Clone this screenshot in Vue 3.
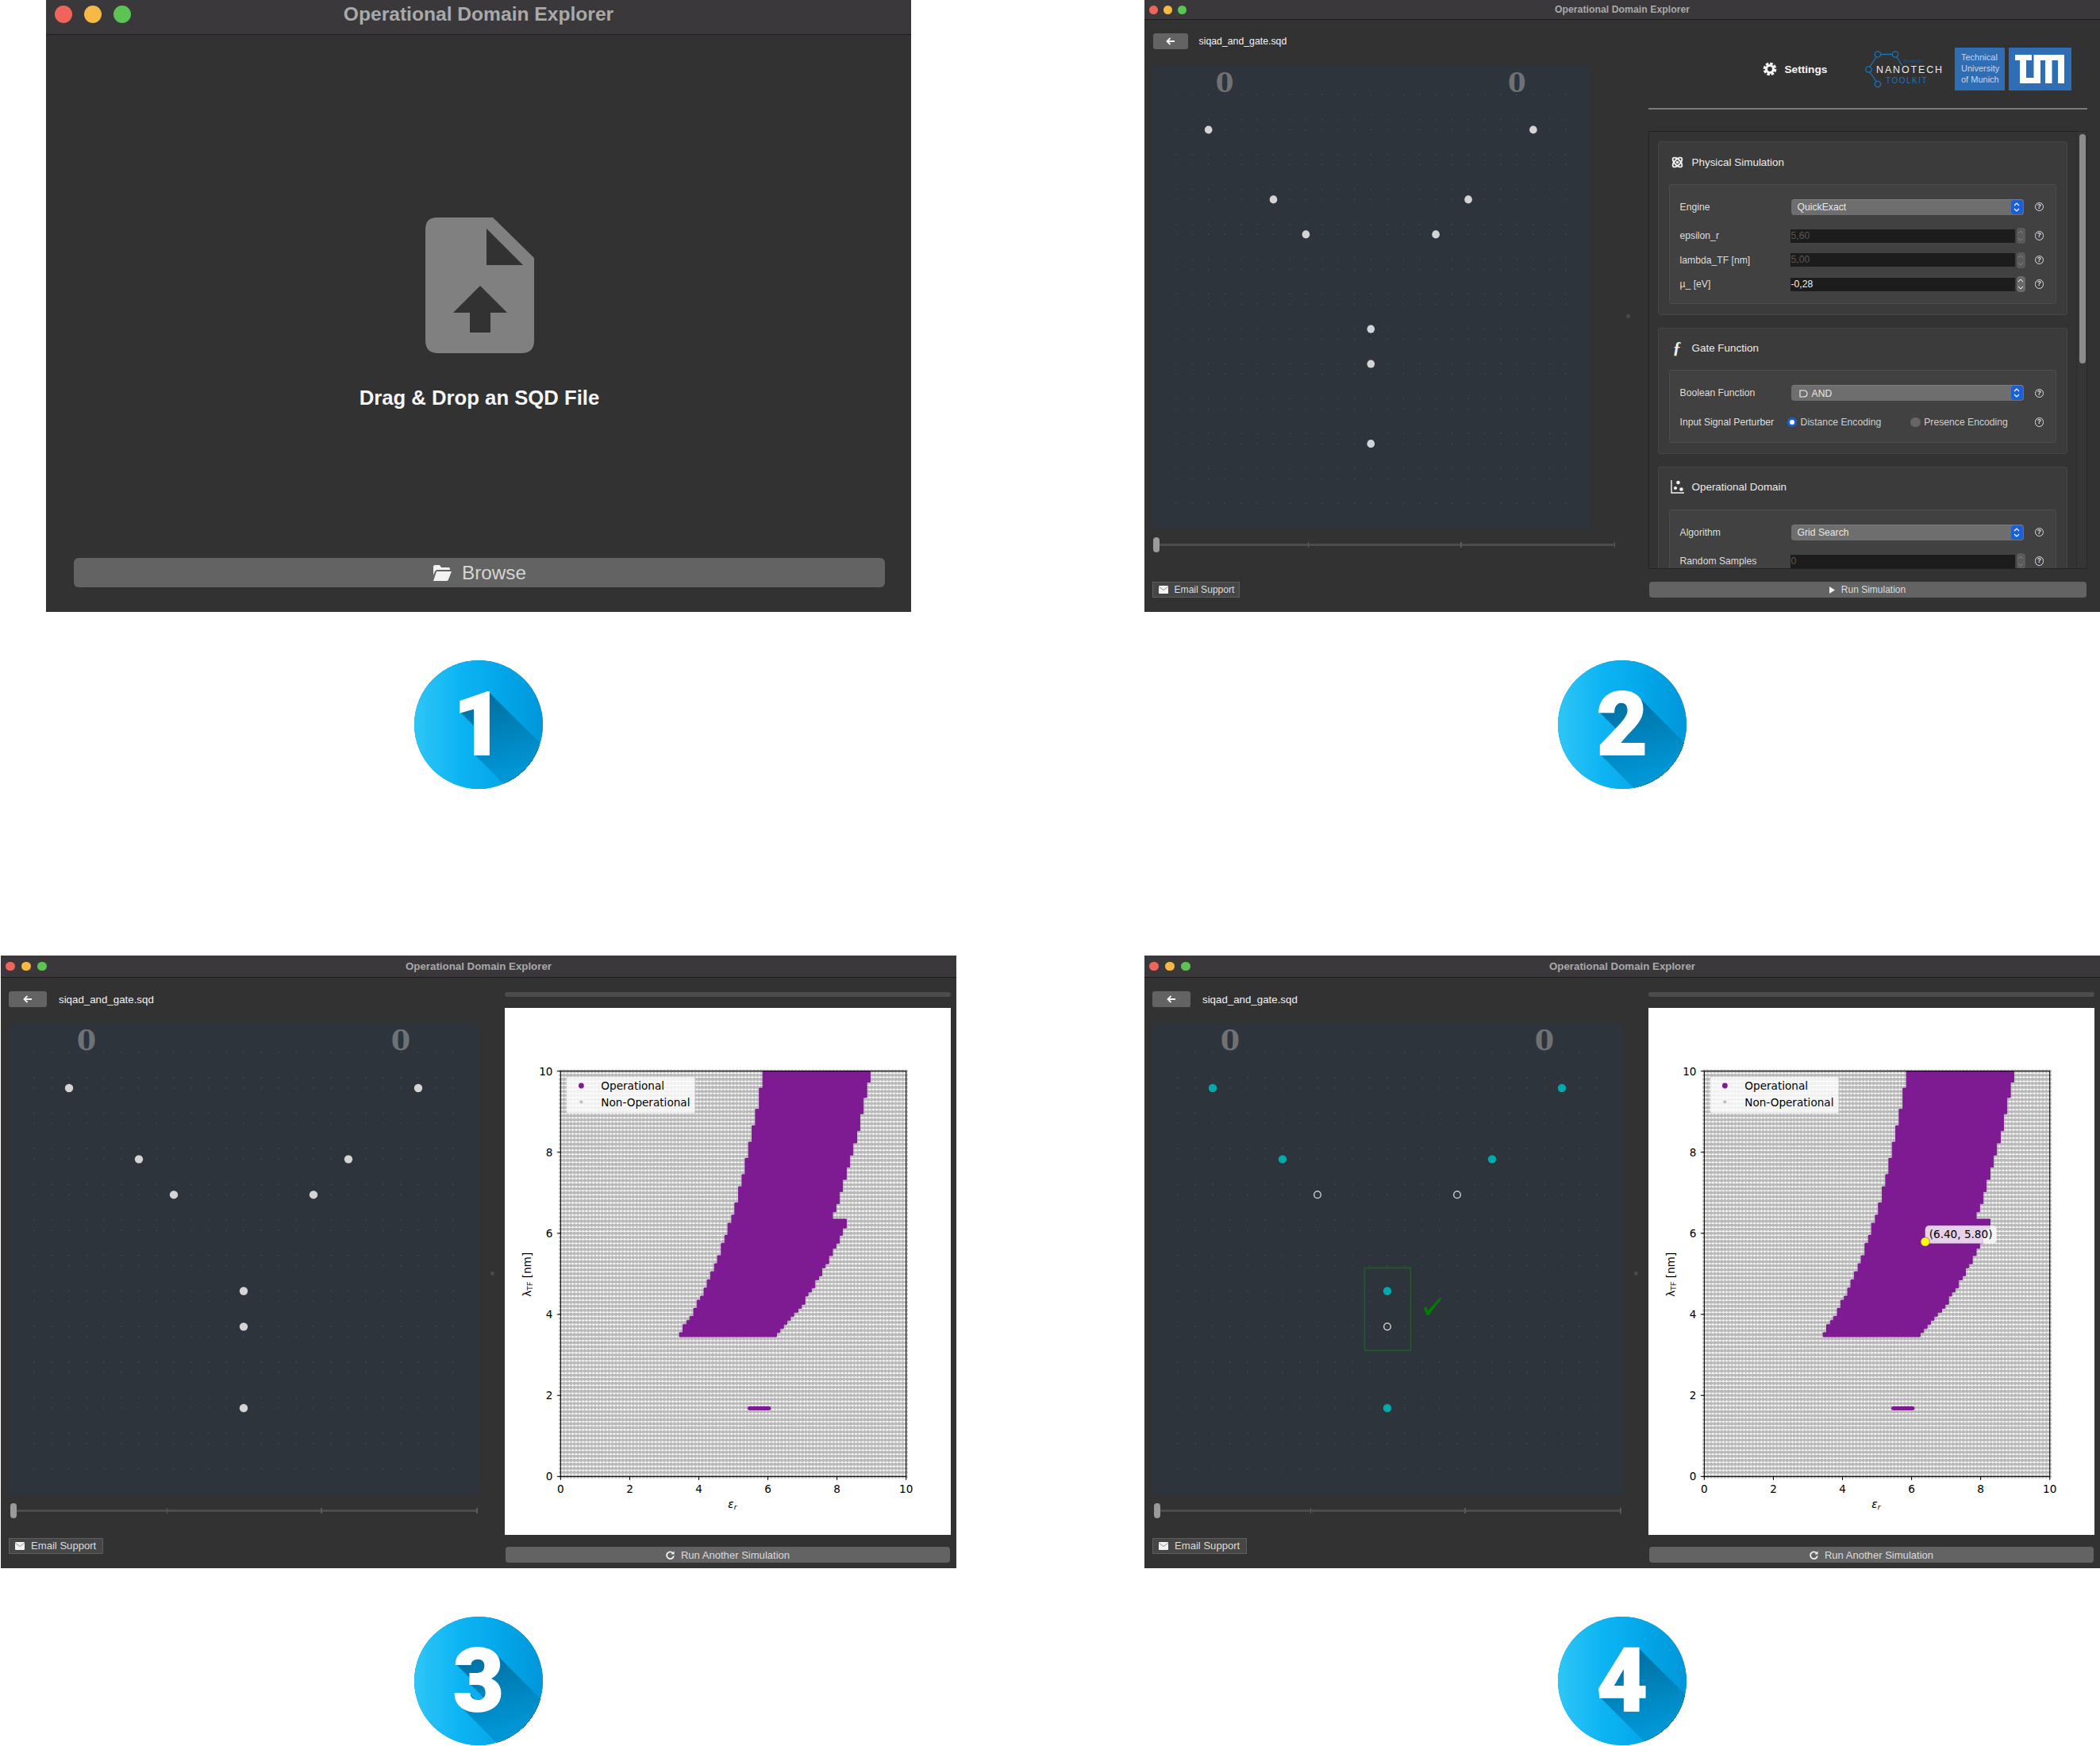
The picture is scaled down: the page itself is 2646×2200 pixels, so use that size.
<template>
  <div class="sheet">
    <!-- step 1: file picker -->
    <section class="step">
      <div class="window picker">
        <div class="titlebar">
          <span class="light red"></span><span class="light yellow"></span><span class="light green"></span>
          <span class="title">Operational Domain Explorer</span>
        </div>
        <div class="picker-body">
          <svg class="file-icon" viewBox="0 0 137 171">
            <path fill="#808080" d="M15 0H85L137 51V155Q137 171 121 171H16Q0 171 0 155V15Q0 0 15 0Z" />
            <path fill="#323232" d="M77 14V60H123Z" />
            <path fill="#323232" d="M69 86L103 120H82V145H56V120H35Z" />
          </svg>
          <p class="drop-text">Drag &amp; Drop an SQD File</p>
          <button class="browse">
            <svg class="folder" viewBox="0 0 24 20">
              <path fill="#f2f2f2" d="M1 2Q1 0 3 0H9L11 3H20Q22 3 22 5V6H6Q4 6 3 8L1 13Z" />
              <path fill="#f2f2f2" d="M5 8H24L20 18Q19.500 20 18 20H1Z" />
            </svg>
            Browse
          </button>
        </div>
      </div>
      <div class="badge"><span class="digit" :style="digitShadow">1</span></div>
    </section>

    <!-- steps 2 to 4 share the lattice pane -->
    <section v-for="win in windows" :key="win.step" class="step" :class="win.kind">
      <div class="window sim">
        <div class="titlebar">
          <span class="light red"></span><span class="light yellow"></span><span class="light green"></span>
          <span class="title">Operational Domain Explorer</span>
        </div>
        <div class="sim-body">
          <div class="lattice-pane">
            <div class="file-row">
              <button class="back">
                <svg viewBox="0 0 12 10" width="12" height="10">
                  <path d="M11 5H2M5.500 1L1.500 5L5.500 9" fill="none" stroke="#f4f4f4" stroke-width="1.800" />
                </svg>
              </button>
              <span class="file-name">siqad_and_gate.sqd</span>
            </div>
            <svg class="lattice" viewBox="0 0 593 593" preserveAspectRatio="none">
              <path :d="latticePath" fill="none" stroke="#4a5058" stroke-width="1.600" stroke-linecap="round" />
              <text x="98" y="33" class="input-zero">0</text>
              <text x="494" y="33" class="input-zero">0</text>
              <circle v-for="d in win.sidbs" :key="d.x + '-' + d.y" :cx="d.x" :cy="d.y" :r="d.state === 'hollow' ? 4.3 : 5.2" :class="d.state" />
              <template v-if="win.check">
                <rect x="267.500" y="307.500" width="58" height="104" fill="none" stroke="#0b6d0b" stroke-width="1.500" />
                <path d="M342 358L345 356.500L347.500 361.500L362.500 345L364 346L348.500 367H345.500Z" fill="#008000" />
              </template>
            </svg>
            <div class="slider">
              <span class="groove"></span>
              <span class="tick first"></span><span class="tick second"></span><span class="tick last"></span>
              <span class="handle"></span>
            </div>
            <button class="email">
              <svg viewBox="0 0 12 10" class="mail">
                <rect width="12" height="10" rx="1" fill="#f2f2f2" />
                <path d="M0.500 1.500L6 5.500L11.500 1.500" fill="none" stroke="#777" stroke-width="0.800" />
              </svg>
              Email Support
            </button>
          </div>

          <div class="splitter"><span></span></div>

          <!-- settings form -->
          <div v-if="win.kind === 'settings'" class="side-pane">
            <div class="brand-row">
              <svg class="gear" viewBox="0 0 20 20">
                <circle cx="10" cy="10" r="7.500" fill="none" stroke="#f4f4f4" stroke-width="3.600" stroke-dasharray="3.900 1.990" />
                <circle cx="10" cy="10" r="5" fill="none" stroke="#f4f4f4" stroke-width="3.600" />
              </svg>
              <span class="settings-word">Settings</span>
              <svg class="nanotech" viewBox="0 0 98 48">
                <g fill="none" stroke="#1a74bd" stroke-width="1.300">
                  <circle cx="16" cy="5.500" r="3.700" />
                  <circle cx="38" cy="5.500" r="3.700" />
                  <circle cx="4.500" cy="24.500" r="3.700" />
                  <circle cx="16" cy="43" r="3.700" />
                  <path d="M20 5.500H34M14 9L6 21M6 28L14 39.500M40 9L47 20" />
                </g>
                <text x="14" y="29" class="logo-main">NANOTECH</text>
                <text x="26" y="41.500" class="logo-sub">TOOLKIT</text>
                <text x="48.500" y="15.500" class="logo-tiny">MUNICH</text>
              </svg>
              <div class="tum-text">Technical<br />University<br />of Munich</div>
              <div class="tum-mark">
                <svg viewBox="0 0 62.500 36" width="62.500" height="36">
                  <path fill="#fff" d="M0 0H21V7H14V29H23.500V0H62.500V36H54V7H46.500V36H38V7H32V36H6V7H0Z" />
                </svg>
              </div>
            </div>
            <div class="divider"></div>
            <div class="scroll-area">
              <div class="scroll-content">
                <div v-for="group in groups" :key="group.title" class="group">
                  <div class="group-head">
                    <span class="head-icon">
                      <svg v-if="group.icon === 'atom'" viewBox="0 0 15 15">
                        <g fill="none" stroke="#f2f2f2" stroke-width="1.900">
                          <ellipse cx="7.500" cy="7.500" rx="7.500" ry="3.600" transform="rotate(45 7.500 7.500)" />
                          <ellipse cx="7.500" cy="7.500" rx="7.500" ry="3.600" transform="rotate(-45 7.500 7.500)" />
                        </g>
                        <circle cx="7.500" cy="7.500" r="1.800" fill="#f2f2f2" />
                      </svg>
                      <span v-else-if="group.icon === 'fn'" class="fn-glyph">ƒ</span>
                      <svg v-else class="wide" viewBox="0 0 17 17">
                        <path d="M1 0V16H17" fill="none" stroke="#f2f2f2" stroke-width="1.400" />
                        <circle cx="9.500" cy="3" r="2.300" fill="#f2f2f2" />
                        <circle cx="6" cy="10" r="2.100" fill="#f2f2f2" />
                        <circle cx="13.500" cy="11.500" r="2.300" fill="#f2f2f2" />
                      </svg>
                    </span>
                    {{ group.title }}
                  </div>
                  <div class="group-inner">
                    <div v-for="row in group.rows" :key="row.label" class="form-row" :class="'row-' + row.type">
                      <span class="form-label">{{ row.label }}</span>
                      <div v-if="row.type === 'select'" class="combo">
                        <svg v-if="row.gate" class="gate" viewBox="0 0 11 10">
                          <path d="M1 1H6Q10 1 10 5T6 9H1Z" fill="none" stroke="#f2f2f2" stroke-width="1.100" />
                        </svg>
                        <span>{{ row.value }}</span>
                        <span class="stepper">
                          <svg viewBox="0 0 8 14" width="8" height="14">
                            <path d="M1 5L4 2L7 5M1 9L4 12L7 9" fill="none" stroke="#fff" stroke-width="1.200" />
                          </svg>
                        </span>
                      </div>
                      <div v-else-if="row.type === 'number'" class="number-box">
                        <span class="number-field" :class="{ muted: row.disabled }">{{ row.value }}</span>
                        <span class="spin" :class="{ muted: row.disabled }">
                          <svg viewBox="0 0 8 18" width="8" height="18">
                            <path d="M1 6L4 3L7 6M1 12L4 15L7 12" fill="none" stroke="currentColor" stroke-width="1" />
                          </svg>
                        </span>
                      </div>
                      <div v-else class="radios">
                        <label v-for="opt in row.options" :key="opt.text" class="radio">
                          <span class="radio-dot" :class="{ on: opt.on }"></span>{{ opt.text }}
                        </label>
                      </div>
                      <span class="help">?</span>
                    </div>
                  </div>
                </div>
              </div>
              <div class="scroll-track"><span class="scroll-thumb"></span></div>
            </div>
            <button class="run">
              <svg viewBox="0 0 7 9" width="7" height="9"><path d="M0 0L7 4.500L0 9Z" fill="#f0f0f0" /></svg>
              Run Simulation
            </button>
          </div>

          <!-- finished simulation -->
          <div v-else class="side-pane">
            <div class="progress"></div>
            <svg class="plot" viewBox="0 0 562 664">
              <path :d="gridPath" fill="none" stroke="#b9b9b9" stroke-width="4.600" stroke-linecap="round" />
              <polygon :points="operationalPoints" fill="#7e1a92" stroke="#7e1a92" stroke-width="1" />
              <path :d="islandPath" fill="none" stroke="#7e1a92" stroke-width="5" stroke-linecap="round" />
              <rect x="70.400" y="79.700" width="435.300" height="510.700" fill="none" stroke="#000" stroke-width="1" />
              <g v-for="t in ticks" :key="t.label" class="tick-group">
                <path :d="`M${t.x} 590.400v4.500M70.400 ${t.y}h-4.500`" stroke="#000" stroke-width="1" />
                <text :x="t.x" y="611" text-anchor="middle">{{ t.label }}</text>
                <text x="60.500" :y="t.y + 5" text-anchor="end">{{ t.label }}</text>
              </g>
              <text x="287" y="630" text-anchor="middle" class="axis-label"><tspan font-style="italic">ε</tspan><tspan font-style="italic" font-size="9.500" dy="2">r</tspan></text>
              <text transform="translate(33 336) rotate(-90)" text-anchor="middle" class="axis-label">λ<tspan font-size="9.500" dy="2">TF</tspan><tspan dy="-2"> [nm]</tspan></text>
              <rect x="77.700" y="86.800" width="162" height="46" rx="3" fill="#fff" fill-opacity="0.800" stroke="#ccc" stroke-opacity="0.500" />
              <circle cx="96.400" cy="98" r="3.400" fill="#7e1a92" />
              <circle cx="96.400" cy="118.500" r="2.100" fill="#bdbdbd" />
              <text x="121.300" y="103" class="legend-text">Operational</text>
              <text x="121.300" y="123.500" class="legend-text">Non-Operational</text>
              <template v-if="win.check">
                <rect x="348.700" y="274.300" width="90" height="22.400" rx="5" fill="#fff" fill-opacity="0.800" />
                <text x="353.700" y="290" class="legend-text">(6.40, 5.80)</text>
                <circle cx="348.700" cy="294.700" r="5.600" fill="#ffff00" stroke="#7e1a92" stroke-width="0.500" />
              </template>
            </svg>
            <button class="run again">
              <svg viewBox="0 0 12 12" width="11" height="11">
                <path d="M10 3.500A4.800 4.800 0 1 0 10.800 7" fill="none" stroke="#f0f0f0" stroke-width="2" />
                <path d="M11.500 0.500V5H7Z" fill="#f0f0f0" />
              </svg>
              Run Another Simulation
            </button>
          </div>
        </div>
      </div>
      <div class="badge"><span class="digit" :style="digitShadow">{{ win.step }}</span></div>
    </section>
  </div>
</template>

<script setup>
// lattice viewBox is window 3's canvas, 593px square
const colX = (i) => 32 + 22 * i
const rowA = (k) => 81 + 44.8 * k
const rowB = (k) => 68 + 44.8 * k

const latticeRows = []
for (let k = -1; k <= 10; k++) latticeRows.push(rowA(k))
for (let k = 0; k <= 11; k++) latticeRows.push(rowB(k))

let lat = ''
for (const y of latticeRows) {
  for (let i = 0; i < 25; i++) lat += `M${colX(i)} ${y}h0`
}
const latticePath = lat

const sidb = (i, y, state) => ({ x: colX(i), y, state })
const plainDots = [
  sidb(2, rowA(0), 'plain'), sidb(22, rowA(0), 'plain'),
  sidb(6, rowA(2), 'plain'), sidb(18, rowA(2), 'plain'),
  sidb(8, rowA(3), 'plain'), sidb(16, rowA(3), 'plain'),
  sidb(12, rowB(6), 'plain'), sidb(12, rowB(7), 'plain'), sidb(12, rowA(9), 'plain')
]
const chargedDots = [
  sidb(2, rowA(0), 'teal'), sidb(22, rowA(0), 'teal'),
  sidb(6, rowA(2), 'teal'), sidb(18, rowA(2), 'teal'),
  sidb(8, rowA(3), 'hollow'), sidb(16, rowA(3), 'hollow'),
  sidb(12, rowB(6), 'teal'), sidb(12, rowB(7), 'hollow'), sidb(12, rowA(9), 'teal')
]

const windows = [
  { step: 2, kind: 'settings', sidbs: plainDots, check: false },
  { step: 3, kind: 'results', sidbs: plainDots, check: false },
  { step: 4, kind: 'results', sidbs: chargedDots, check: true }
]

const groups = [
  {
    title: 'Physical Simulation',
    icon: 'atom',
    rows: [
      { label: 'Engine', type: 'select', value: 'QuickExact' },
      { label: 'epsilon_r', type: 'number', value: '5,60', disabled: true },
      { label: 'lambda_TF [nm]', type: 'number', value: '5,00', disabled: true },
      { label: 'µ_ [eV]', type: 'number', value: '-0,28' }
    ]
  },
  {
    title: 'Gate Function',
    icon: 'fn',
    rows: [
      { label: 'Boolean Function', type: 'select', value: 'AND', gate: true },
      {
        label: 'Input Signal Perturber',
        type: 'radio',
        options: [
          { text: 'Distance Encoding', on: true },
          { text: 'Presence Encoding', on: false }
        ]
      }
    ]
  },
  {
    title: 'Operational Domain',
    icon: 'chart',
    rows: [
      { label: 'Algorithm', type: 'select', value: 'Grid Search' },
      { label: 'Random Samples', type: 'number', value: '0', disabled: true }
    ]
  }
]

// plot: data to svg coordinates
const px = (eps) => 70.4 + eps * 43.53
const py = (lam) => 79.7 + (10 - lam) * 51.07

let grid = ''
for (let a = 0; a <= 100; a++) {
  for (let b = 0; b <= 100; b++) {
    grid += `M${px(a / 10).toFixed(2)} ${py(b / 10).toFixed(2)}h0`
  }
}
const gridPath = grid

// [top of stair in lambda, epsilon of that stair]
const leftEdge = [
  [10, 5.85], [9.58, 5.75], [9.06, 5.64], [8.65, 5.54], [8.25, 5.44], [7.85, 5.34], [7.45, 5.25],
  [7.15, 5.15], [6.75, 5.04], [6.45, 4.95], [6.25, 4.84], [5.95, 4.75], [5.75, 4.65], [5.45, 4.54],
  [5.25, 4.45], [5.05, 4.34], [4.85, 4.24], [4.65, 4.15], [4.45, 4.05], [4.35, 3.95], [4.15, 3.85],
  [3.95, 3.74], [3.85, 3.65], [3.75, 3.54], [3.55, 3.44]
]
const rightEdge = [
  [10, 8.96], [9.73, 8.86], [9.35, 8.76], [8.95, 8.66], [8.53, 8.57], [8.23, 8.46], [7.93, 8.37],
  [7.63, 8.27], [7.33, 8.16], [7.03, 8.07], [6.73, 7.97], [6.53, 7.87], [6.35, 8.27], [6.13, 8.16],
  [5.95, 8.07], [5.75, 7.97], [5.63, 7.87], [5.45, 7.76], [5.25, 7.66], [5.15, 7.56], [4.95, 7.47],
  [4.85, 7.36], [4.65, 7.26], [4.55, 7.16], [4.45, 7.07], [4.25, 6.97], [4.15, 6.87], [4.05, 6.75],
  [3.95, 6.65], [3.85, 6.55], [3.75, 6.45], [3.65, 6.35], [3.55, 6.25]
]
const bottom = 3.45
const pts = []
leftEdge.forEach(([top, eps], i) => {
  const next = leftEdge[i + 1] ? leftEdge[i + 1][0] : bottom
  pts.push([eps, top], [eps, next])
})
for (let i = rightEdge.length - 1; i >= 0; i--) {
  const [top, eps] = rightEdge[i]
  const next = rightEdge[i + 1] ? rightEdge[i + 1][0] : bottom
  pts.push([eps, next], [eps, top])
}
const operationalPoints = pts.map(([e, l]) => `${px(e).toFixed(1)},${py(l).toFixed(1)}`).join(' ')
const islandPath = `M${px(5.47)} ${py(1.68)}H${px(6.03)}`

const ticks = [0, 2, 4, 6, 8, 10].map((v) => ({ label: v, x: px(v), y: py(v) }))

// long shadow behind the badge numbers, lifted by the badge overlay further down
const layers = []
for (let i = 1; i <= 110; i++) layers.push(`${i}px ${i}px 0 #006a98`)
const digitShadow = { textShadow: layers.join(',') }
</script>

<style scoped>
.sheet {
  width: 2646px;
  height: 2200px;
  display: grid;
  grid-template-columns: 1206px 1204px;
  grid-template-rows: 1204px 996px;
  column-gap: 236px;
  font-family: "Liberation Sans", Arial, sans-serif;
  background: #fff;
  overflow: hidden;
}

.step {
  display: flex;
  flex-direction: column;
  align-items: center;
}

.window {
  background: #323232;
  color: #e8e8e8;
  box-sizing: border-box;
  display: flex;
  flex-direction: column;
}

.titlebar {
  flex: none;
  display: flex;
  align-items: center;
  position: relative;
  background: #3a383b;
  border-bottom: 1px solid #1c1c1c;
  box-sizing: border-box;
}

.title {
  position: absolute;
  left: 0;
  right: 0;
  text-align: center;
  font-weight: 700;
  color: #a9a9a9;
}

.light {
  border-radius: 50%;
  flex: none;
}

.red { background: #f0655b; }
.yellow { background: #f6b945; }
.green { background: #5cc453; }

.badge {
  flex: none;
  position: relative;
  isolation: isolate;
  width: 162px;
  height: 162px;
  margin-top: 61px;
  border-radius: 50%;
  overflow: hidden;
  display: flex;
  align-items: center;
  justify-content: center;
  background: linear-gradient(90deg, #2ec6f7 0%, #0db4f3 35%, #03a8ea 65%, #0096da 100%);
}

/* only the shadow is darker than this, so the circle and the digit stay as they are */
.badge::after {
  content: "";
  position: absolute;
  inset: 0;
  background: linear-gradient(165deg, #006a98 25%, #0096d6 85%);
  mix-blend-mode: lighten;
}

.digit {
  font-family: Roboto, Inter, sans-serif;
  font-weight: 900;
  font-size: 111px;
  line-height: 1;
  color: #fff;
  -webkit-text-stroke: 1.500px #fff;
}

/* step 1 */
.picker {
  width: 1090px;
  height: 771px;
}

.picker .titlebar {
  height: 44px;
  padding: 0 0 8px 11px;
  gap: 15px;
}

.picker .title { font-size: 24.600px; }
.picker .light { width: 22px; height: 22px; }

.picker-body {
  flex: 1;
  display: flex;
  flex-direction: column;
  align-items: center;
  padding: 230px 33px 31px 35px;
}

.file-icon {
  width: 137px;
  height: 171px;
  flex: none;
}

.drop-text {
  margin: 41px 0 0;
  font-size: 25.700px;
  line-height: 30px;
  font-weight: 700;
  color: #f6f6f6;
}

.browse {
  margin-top: auto;
  width: 100%;
  height: 37px;
  border: none;
  border-radius: 6px;
  background: #636363;
  color: #d4d4d4;
  font-family: inherit;
  font-size: 24.300px;
  display: flex;
  align-items: center;
  justify-content: center;
  gap: 13px;
}

.folder { width: 24px; height: 20px; }

/* steps 2-4 */
.sim {
  width: 1204px;
  height: 771px;
}

.results .sim { height: 772px; }

.settings .titlebar { height: 25px; padding-left: 6px; gap: 7px; }
.results .titlebar { height: 28px; padding-left: 6px; gap: 8.500px; }
.settings .title { font-size: 12.300px; }
.results .title { font-size: 13.300px; }
.settings .light { width: 11px; height: 11px; }
.results .light { width: 11.500px; height: 11.500px; }

.sim-body {
  flex: 1;
  min-height: 0;
  display: flex;
  padding-top: 17px;
}

.lattice-pane {
  flex: none;
  display: flex;
  flex-direction: column;
  align-items: flex-start;
}

.settings .lattice-pane { width: 584px; margin-left: 9.500px; }
.results .lattice-pane { width: 594px; margin-left: 10px; }

.file-row {
  display: flex;
  align-items: center;
  height: 20px;
}

.back {
  border: none;
  padding: 0;
  border-radius: 3px;
  background: #636363;
  display: flex;
  align-items: center;
  justify-content: center;
  height: 20px;
}

.settings .back { width: 44px; margin-left: 1px; }
.results .back { width: 48px; }

.file-name { color: #f2f2f2; }
.settings .file-name { margin-left: 14px; font-size: 12.300px; }
.results .file-name { margin-left: 15px; font-size: 13.300px; }

.lattice {
  flex: none;
  display: block;
  background: #2e343c;
}

.settings .lattice { width: 551.500px; height: 582px; margin-top: 22px; }
.results .lattice { width: 593px; height: 593px; margin-top: 21px; }

.input-zero {
  font-family: "DejaVu Serif", serif;
  font-weight: 700;
  font-size: 35px;
  fill: #6f7275;
  text-anchor: middle;
}

.plain { fill: #d4d4d4; }
.teal { fill: #00a9ab; }
.hollow { fill: none; stroke: #c8c8c8; stroke-width: 1.500; }

.slider {
  position: relative;
  flex: none;
  height: 19px;
  margin-top: 11px;
  margin-left: 1.500px;
}

.settings .slider { width: 582px; }
.results .slider { width: 589px; }

.groove {
  position: absolute;
  left: 0;
  right: 0;
  top: 8px;
  height: 3px;
  background: #4c4c4c;
}

.tick {
  position: absolute;
  top: 6px;
  width: 1.500px;
  height: 7px;
  background: #5a5a5a;
}

.tick.first { left: 33.500%; }
.tick.second { left: 66.500%; }
.tick.last { right: 0; }

.handle {
  position: absolute;
  left: 0;
  top: 0;
  width: 8px;
  height: 19px;
  border-radius: 4px;
  background: #9a9a9a;
}

.email {
  flex: none;
  box-sizing: border-box;
  height: 20px;
  padding: 0 0 0 7px;
  display: flex;
  align-items: center;
  gap: 8px;
  background: #464646;
  border: 1px solid #5e5e5e;
  color: #dcdcdc;
  font-family: inherit;
}

.settings .email { width: 110px; margin-top: 37px; font-size: 12.100px; }
.results .email { width: 119px; margin-top: 24.500px; font-size: 13.100px; }
.mail { width: 12px; height: 10px; }

.splitter {
  flex: none;
  display: flex;
  align-items: center;
  margin-top: -17px;
}

.splitter span {
  width: 5px;
  height: 5px;
  border-radius: 50%;
  background: #4a4a4a;
}

.settings .splitter { width: 41px; padding-left: 13px; box-sizing: border-box; }
.results .splitter { width: 31px; padding-left: 13px; box-sizing: border-box; }

.side-pane {
  flex: none;
  display: flex;
  flex-direction: column;
  min-height: 0;
}

.settings .side-pane { width: 553px; margin-top: -7px; }
.results .side-pane { width: 562px; margin-top: 1px; }

.brand-row {
  flex: none;
  height: 54px;
  padding-right: 20px;
  display: flex;
  align-items: center;
  justify-content: flex-end;
  margin-top: 25px;
}

.gear {
  width: 18px;
  height: 18px;
}

.settings-word {
  margin-left: 9px;
  font-size: 13.700px;
  font-weight: 700;
  color: #f6f6f6;
}

.nanotech {
  width: 98px;
  height: 48px;
  margin-left: 48px;
}

.logo-main {
  font-family: "Liberation Sans", sans-serif;
  font-size: 12.500px;
  letter-spacing: 1.850px;
  fill: #ececec;
}

.logo-sub {
  font-family: "Liberation Sans", sans-serif;
  font-size: 10px;
  letter-spacing: 1.500px;
  fill: #1a74bd;
}

.logo-tiny {
  font-family: "Liberation Sans", sans-serif;
  font-size: 5.500px;
  letter-spacing: 0.300px;
  fill: #155a94;
}

.tum-text {
  box-sizing: border-box;
  width: 63px;
  height: 54px;
  margin-left: 14.600px;
  padding: 5px 0 0 8px;
  background: #2f6db4;
  color: #c4d8ee;
  font-size: 11px;
  line-height: 14px;
}

.tum-mark {
  width: 79px;
  height: 54px;
  margin-left: 4.500px;
  background: #2f6db4;
  display: flex;
  align-items: center;
  justify-content: center;
}

.divider {
  flex: none;
  height: 2px;
  margin-top: 22px;
  background: #7a7a7a;
}

.scroll-area {
  flex: none;
  height: 552px;
  margin-top: 27px;
  box-sizing: border-box;
  border: 1px solid #232323;
  border-right-color: #2a2a2a;
  background: #333;
  display: flex;
  overflow: hidden;
}

.scroll-content {
  flex: 1;
  min-width: 0;
  padding: 12px 0 0 11px;
}

.scroll-track {
  flex: none;
  width: 13px;
  box-sizing: border-box;
  padding: 3px 0 0 3px;
  background: #353535;
  border-left: 1px solid #2c2c2c;
}

.scroll-thumb {
  display: block;
  width: 8px;
  height: 289px;
  border-radius: 4px;
  background: #8c8c8c;
}

.group {
  box-sizing: border-box;
  width: 516px;
  margin-bottom: 15.700px;
  padding: 0 13px 13px;
  background: #3b3b3b;
  border: 1px solid #464646;
  border-radius: 3px;
}

.group-head {
  box-sizing: border-box;
  display: flex;
  align-items: center;
  height: 52.600px;
  padding-bottom: 2.600px;
  font-size: 13.450px;
  color: #ececec;
}

.head-icon {
  width: 15px;
  height: 15px;
  margin: 0 11px 0 3px;
  display: flex;
  align-items: center;
  justify-content: center;
}

.head-icon svg {
  width: 15px;
  height: 15px;
  flex: none;
  display: block;
}

.head-icon svg.wide {
  width: 17px;
  height: 17px;
}

.fn-glyph {
  font-family: "Liberation Serif", serif;
  font-style: italic;
  font-weight: 700;
  font-size: 21px;
  color: #f2f2f2;
}

.group-inner {
  box-sizing: border-box;
  padding: 18px 13px 13.800px 13px;
  background: #414141;
  border: 1px solid #4d4d4d;
  border-radius: 3px;
}

.form-row {
  display: flex;
  align-items: center;
  height: 20px;
  margin-top: 16.600px;
}

.form-row:first-child { margin-top: 0; }
.row-number + .row-number { margin-top: 10.500px; }
.row-radio { margin-bottom: 1.600px; }

.form-label {
  flex: none;
  width: 140px;
  font-size: 12.200px;
  color: #dedede;
  white-space: nowrap;
}

.combo {
  flex: none;
  box-sizing: border-box;
  width: 293px;
  height: 20px;
  margin-right: 2.500px;
  padding-left: 8px;
  display: flex;
  align-items: center;
  gap: 5px;
  position: relative;
  border-radius: 4px;
  background: #6e6e6e;
  border-top: 1px solid #7c7c7c;
  font-size: 12.200px;
  color: #e6e6e6;
}

.gate { width: 11px; height: 10px; margin-left: 2px; }

.stepper {
  position: absolute;
  right: 1px;
  top: 0;
  width: 15px;
  height: 18px;
  border-radius: 4px;
  background: #1a5fd8;
  display: flex;
  align-items: center;
  justify-content: center;
}

.number-box {
  flex: none;
  width: 296.500px;
  display: flex;
  align-items: center;
  margin-left: -1px;
}

.number-field {
  flex: none;
  box-sizing: border-box;
  width: 283px;
  height: 17px;
  line-height: 17px;
  padding-left: 1px;
  background: #1c1c1c;
  font-size: 12.200px;
  color: #f0f0f0;
}

.number-field.muted { color: #565656; }

.spin {
  flex: none;
  margin-left: 2px;
  width: 11.500px;
  height: 20px;
  border-radius: 4px;
  background: #6a6a6a;
  color: #fff;
  display: flex;
  align-items: center;
  justify-content: center;
}

.spin.muted { background: #5a5a5a; color: #808080; }

.radios {
  flex: none;
  width: 300.500px;
  display: flex;
  margin-left: -5px;
}

.radio {
  flex: none;
  width: 155.600px;
  display: flex;
  align-items: center;
  font-size: 12.200px;
  color: #cfcfcf;
  white-space: nowrap;
}

.radio + .radio { width: 140px; }

.radio-dot {
  flex: none;
  box-sizing: border-box;
  width: 12.600px;
  height: 12.600px;
  margin-right: 4.500px;
  border-radius: 50%;
  background: #666;
}

.radio-dot.on {
  background: #fff;
  border: 3.900px solid #1a5fd8;
}

.help {
  flex: none;
  box-sizing: border-box;
  width: 11.500px;
  height: 11.500px;
  margin-left: 11.500px;
  border: 1.200px solid #e0e0e0;
  border-radius: 50%;
  font-size: 8.500px;
  font-weight: 700;
  line-height: 9px;
  text-align: center;
  color: #e0e0e0;
}

.run {
  flex: none;
  height: 20px;
  border: none;
  border-radius: 4px;
  background: #636363;
  color: #dcdcdc;
  font-family: inherit;
  display: flex;
  align-items: center;
  justify-content: center;
}

.settings .run {
  margin: 16px 0 0 1px;
  width: 551px;
  font-size: 12px;
  gap: 8px;
}

.results .run {
  margin: 15px 1px 0;
  width: 560px;
  font-size: 13.070px;
  gap: 8px;
}

.progress {
  flex: none;
  height: 6px;
  border-radius: 3px;
  background: #4c4c4c;
}

.plot {
  flex: none;
  width: 562px;
  height: 664px;
  margin-top: 14px;
  background: #fff;
}

.tick-group text,
.axis-label,
.legend-text {
  font-family: "DejaVu Sans", sans-serif;
  font-size: 13.600px;
  fill: #000;
}
</style>

<style>
html, body {
  background: #fff;
}
</style>
